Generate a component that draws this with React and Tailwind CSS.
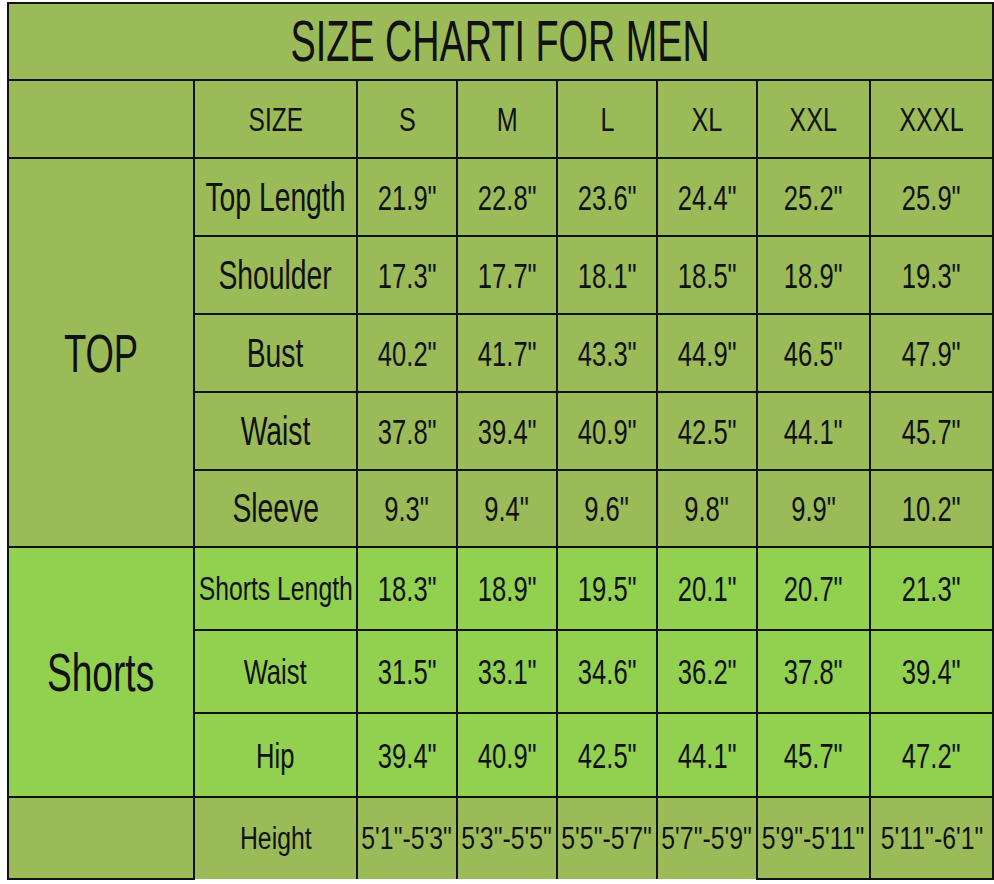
import React from 'react';

const sizes = ['S', 'M', 'L', 'XL', 'XXL', 'XXXL'];

const topRows = [
  { label: 'Top Length', values: ['21.9"', '22.8"', '23.6"', '24.4"', '25.2"', '25.9"'] },
  { label: 'Shoulder', values: ['17.3"', '17.7"', '18.1"', '18.5"', '18.9"', '19.3"'] },
  { label: 'Bust', values: ['40.2"', '41.7"', '43.3"', '44.9"', '46.5"', '47.9"'] },
  { label: 'Waist', values: ['37.8"', '39.4"', '40.9"', '42.5"', '44.1"', '45.7"'] },
  { label: 'Sleeve', values: ['9.3"', '9.4"', '9.6"', '9.8"', '9.9"', '10.2"'] },
];

const shortsRows = [
  { label: 'Shorts Length', small: true, values: ['18.3"', '18.9"', '19.5"', '20.1"', '20.7"', '21.3"'] },
  { label: 'Waist', values: ['31.5"', '33.1"', '34.6"', '36.2"', '37.8"', '39.4"'] },
  { label: 'Hip', values: ['39.4"', '40.9"', '42.5"', '44.1"', '45.7"', '47.2"'] },
];

const heights = ['5\'1"-5\'3"', '5\'3"-5\'5"', '5\'5"-5\'7"', '5\'7"-5\'9"', '5\'9"-5\'11"', '5\'11"-6\'1"'];

// the chart is squeezed sideways, so every text gets a narrow scale
// flex keeps the text centred even when its unscaled box is wider than the cell
const Txt = ({ className = '', children }) => (
  <div className="flex justify-center">
    <span className={`inline-block shrink-0 whitespace-nowrap ${className}`}>{children}</span>
  </div>
);

const cell = 'border-2 border-[#111] text-center align-middle p-0';

export default function App() {
  return (
    <div className="bg-white w-[994px] h-[884px] pt-[2px] pl-[7px]" style={{ fontFamily: '"Liberation Sans", Arial, sans-serif' }}>
      <table className="table-fixed border-collapse w-[985px] text-[#111] leading-none">
        <colgroup>
          <col className="w-[186px]" />
          <col className="w-[163px]" />
          <col className="w-[100px]" />
          <col className="w-[100px]" />
          <col className="w-[100px]" />
          <col className="w-[100px]" />
          <col className="w-[113px]" />
          <col className="w-[123px]" />
        </colgroup>
        <tbody>
          <tr className="h-[77px] bg-[#9bbb59]">
            <td colSpan={8} className={cell}>
              <Txt className="text-[57px] scale-x-[0.663]">SIZE CHARTI FOR MEN</Txt>
            </td>
          </tr>
          <tr className="h-[78px] bg-[#9bbb59]">
            <td className={cell}></td>
            <td className={cell}>
              <Txt className="text-[34px] scale-x-[0.72]">SIZE</Txt>
            </td>
            {sizes.map((s) => (
              <td key={s} className={cell}>
                <Txt className="text-[34px] scale-x-[0.74]">{s}</Txt>
              </td>
            ))}
          </tr>
          {topRows.map((row, i) => (
            <tr key={row.label} className={`${i === 4 ? 'h-[77px]' : 'h-[78px]'} bg-[#9bbb59]`}>
              {i === 0 && (
                <td rowSpan={5} className={cell}>
                  <Txt className="text-[54px] scale-x-[0.675]">TOP</Txt>
                </td>
              )}
              <td className={cell}>
                <Txt className="text-[41px] scale-x-[0.69]">{row.label}</Txt>
              </td>
              {row.values.map((v, j) => (
                <td key={j} className={cell}>
                  <Txt className="text-[35px] scale-x-[0.73]">{v}</Txt>
                </td>
              ))}
            </tr>
          ))}
          {shortsRows.map((row, i) => (
            <tr key={row.label + i} className={`${i === 2 ? 'h-[84px]' : 'h-[83px]'} bg-[#92d050]`}>
              {i === 0 && (
                <td rowSpan={3} className={cell}>
                  <Txt className="text-[53px] scale-x-[0.7]">Shorts</Txt>
                </td>
              )}
              <td className={cell}>
                {row.small ? (
                  <Txt className="text-[33px] scale-x-[0.75]">{row.label}</Txt>
                ) : (
                  <Txt className="text-[35px] scale-x-[0.73]">{row.label}</Txt>
                )}
              </td>
              {row.values.map((v, j) => (
                <td key={j} className={cell}>
                  <Txt className="text-[35px] scale-x-[0.73]">{v}</Txt>
                </td>
              ))}
            </tr>
          ))}
          <tr className="h-[82px] bg-[#9bbb59]">
            <td className={cell}></td>
            <td className={`${cell} border-b-0`}>
              <Txt className="text-[31px] scale-x-[0.8]">Height</Txt>
            </td>
            {heights.map((h, j) => (
              <td key={j} className={`${cell} ${j < 4 ? 'border-b-0' : ''}`}>
                <Txt className="text-[31px] scale-x-[0.8]">{h}</Txt>
              </td>
            ))}
          </tr>
        </tbody>
      </table>
    </div>
  );
}
